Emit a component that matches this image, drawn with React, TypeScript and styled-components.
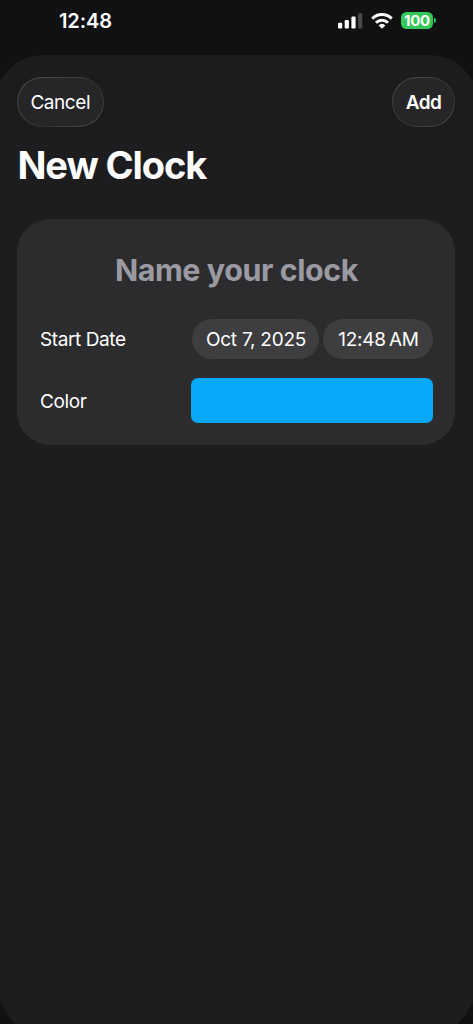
import React from "react";
import styled, { createGlobalStyle } from "styled-components";

const GlobalStyle = createGlobalStyle`
  * { box-sizing: border-box; }
  html, body { margin: 0; background: #101113; overflow: hidden; }
  body { font-family: Inter, "Liberation Sans", sans-serif; color: #fff; -webkit-font-smoothing: antialiased; }
`;

const Screen = styled.main`
  width: 473px;
  height: 1024px;
  overflow: hidden;
  display: flex;
  flex-direction: column;
  background: #101113;
`;

const StatusBar = styled.header`
  height: 54.5px;
  flex: none;
  display: flex;
  justify-content: space-between;
  padding: 9px 37px 0 59px;
`;

const Time = styled.span`
  height: 24px;
  font-size: 20px;
  line-height: 25px;
  font-weight: 600;
  letter-spacing: -0.1px;
  white-space: nowrap;
`;

const StatusIcons = styled.div`
  display: flex;
  align-items: center;
  height: 24px;
`;

const Signal = styled.svg`
  display: block;
  margin: -1px 8px 0 0;
`;

const Wifi = styled.svg`
  display: block;
  margin: -1px 8px 0 0;
`;

const Battery = styled.div`
  width: 32px;
  height: 17px;
  margin-top: -1px;
  border-radius: 5.5px;
  background: #34c759;
  font-size: 15px;
  line-height: 17px;
  font-weight: 700;
  text-align: center;
  letter-spacing: -0.2px;
`;

const BatteryTip = styled.div`
  width: 2px;
  height: 5px;
  margin: -1px 0 0 1px;
  border-radius: 0 2px 2px 0;
  background: #34c759;
`;

const Sheet = styled.section`
  flex: none;
  height: 993px;
  margin: 0 -6px;
  padding: 22.5px 24px 0 23px;
  border-radius: 50px 50px 77px 77px;
  background: #1d1d1f;
`;

const Toolbar = styled.nav`
  display: flex;
  justify-content: space-between;
`;

const GlassButton = styled.button<{ $width: number; $strong?: boolean }>`
  width: ${(p) => p.$width}px;
  height: 50px;
  padding: 0;
  border: 1px solid transparent;
  border-radius: 25px;
  background:
    linear-gradient(#262628, #262628) padding-box,
    linear-gradient(145deg, #555557 0%, #3e3e40 35%, #333335 60%, #505052 100%) border-box;
  box-shadow: 0 3px 12px rgba(0, 0, 0, 0.1);
  color: #fff;
  font-family: inherit;
  font-size: 19px;
  font-weight: ${(p) => (p.$strong ? 600 : 400)};
  letter-spacing: ${(p) => (p.$strong ? "-0.5px" : "-0.45px")};
`;

const Title = styled.h1`
  margin: 14px 0 0;
  padding-left: 0.5px;
  height: 48px;
  font-size: 38px;
  line-height: 48px;
  font-weight: 700;
  letter-spacing: -1.1px;
  white-space: nowrap;
`;

const Card = styled.div`
  height: 226px;
  margin-top: 30px;
  padding: 32px 22px 0 23px;
  border-radius: 33px;
  background: #2c2c2e;
`;

const NameField = styled.div`
  height: 40px;
  color: #9b9aa2;
  font-size: 30.5px;
  line-height: 38px;
  font-weight: 700;
  letter-spacing: -0.45px;
  text-align: center;
  white-space: nowrap;
`;

const Row = styled.div<{ $gap: number; $height: number }>`
  height: ${(p) => p.$height}px;
  margin-top: ${(p) => p.$gap}px;
  display: flex;
  align-items: center;
  justify-content: space-between;
`;

const Label = styled.span`
  padding-top: 2px;
  font-size: 19px;
  line-height: 24px;
  letter-spacing: -0.4px;
`;

const Pickers = styled.div`
  display: flex;
  gap: 4px;
`;

const Pill = styled.div<{ $width: number; $tracking: number }>`
  width: ${(p) => p.$width}px;
  height: 40px;
  padding-left: 1px;
  border-radius: 20px;
  background: #3e3e40;
  font-size: 19px;
  line-height: 41px;
  letter-spacing: ${(p) => p.$tracking}px;
  text-align: center;
  white-space: nowrap;
`;

const Swatch = styled.div`
  width: 242px;
  height: 45px;
  border-radius: 7px;
  background: #05a9f7;
`;

export default function App() {
  return (
    <>
      <GlobalStyle />
      <Screen>
        <StatusBar>
          <Time>12:48</Time>
          <StatusIcons>
            <Signal width="25" height="16" viewBox="0 0 25 16" fill="#fff">
              <rect x="0" y="9.8" width="4.2" height="5.7" rx="1.2" />
              <rect x="6.7" y="7" width="4.2" height="8.5" rx="1.2" />
              <rect x="13.4" y="3.5" width="4.2" height="12" rx="1.2" />
              <rect x="20.1" y="0.3" width="4.2" height="15.2" rx="1.2" fill="#49494b" />
            </Signal>
            <Wifi width="22" height="16" viewBox="0 0 22 16" fill="none" stroke="#fff" strokeWidth="3">
              <path d="M1.3 5.6a13.8 13.8 0 0 1 19.4 0" />
              <path d="M5 9.7a8.6 8.6 0 0 1 12 0" />
              <path d="M11 15.8l-3.4-3.4a5 5 0 0 1 6.8 0z" fill="#fff" stroke="none" />
            </Wifi>
            <Battery>100</Battery>
            <BatteryTip />
          </StatusIcons>
        </StatusBar>
        <Sheet>
          <Toolbar>
            <GlassButton $width={86.5}>Cancel</GlassButton>
            <GlassButton $width={63} $strong>Add</GlassButton>
          </Toolbar>
          <Title>New Clock</Title>
          <Card>
            <NameField>Name your clock</NameField>
            <Row $gap={28} $height={40}>
              <Label>Start Date</Label>
              <Pickers>
                <Pill $width={127} $tracking={-0.25}>Oct 7, 2025</Pill>
                <Pill $width={110} $tracking={-0.25}>12:48{"\u202f"}AM</Pill>
              </Pickers>
            </Row>
            <Row $gap={19} $height={45}>
              <Label>Color</Label>
              <Swatch />
            </Row>
          </Card>
        </Sheet>
      </Screen>
    </>
  );
}
